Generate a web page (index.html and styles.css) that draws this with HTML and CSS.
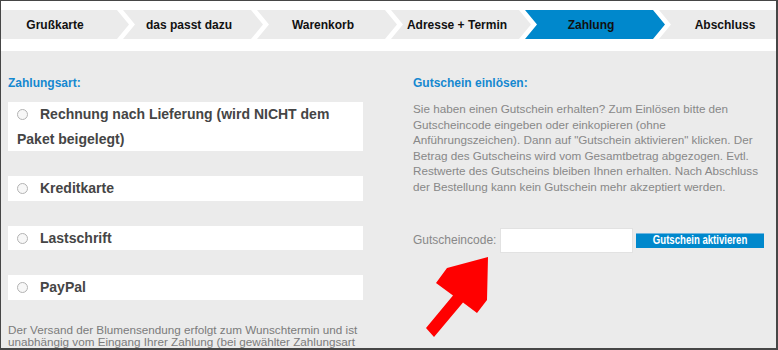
FILE: index.html
```html
<!DOCTYPE html>
<html lang="de">
<head>
<meta charset="utf-8">
<title>Zahlung</title>
<link rel="stylesheet" href="styles.css">
</head>
<body>
<div class="frame">
  <nav class="steps">
    <div class="step">Grußkarte</div>
    <div class="step">das passt dazu</div>
    <div class="step">Warenkorb</div>
    <div class="step">Adresse + Termin</div>
    <div class="step active">Zahlung</div>
    <div class="step">Abschluss</div>
  </nav>
  <main class="content">
    <section class="col left">
      <h2 class="heading">Zahlungsart:</h2>
      <div class="opt"><span class="radio"></span>Rechnung nach Lieferung (wird NICHT dem Paket beigelegt)</div>
      <div class="opt"><span class="radio"></span>Kreditkarte</div>
      <div class="opt"><span class="radio"></span>Lastschrift</div>
      <div class="opt"><span class="radio"></span>PayPal</div>
      <p class="note">Der Versand der Blumensendung erfolgt zum Wunschtermin und ist<br>unabhängig vom Eingang Ihrer Zahlung (bei gewählter Zahlungsart</p>
    </section>
    <section class="col right">
      <h2 class="heading">Gutschein einlösen:</h2>
      <p class="info">Sie haben einen Gutschein erhalten? Zum Einlösen bitte den<br>Gutscheincode eingeben oder einkopieren (ohne<br>Anführungszeichen). Dann auf "Gutschein aktivieren" klicken. Der<br>Betrag des Gutscheins wird vom Gesamtbetrag abgezogen. Evtl.<br>Restwerte des Gutscheins bleiben Ihnen erhalten. Nach Abschluss<br>der Bestellung kann kein Gutschein mehr akzeptiert werden.</p>
      <div class="code-row">
        <label class="code-label">Gutscheincode:</label>
        <span class="code-input"></span>
        <button class="code-btn" type="button"><span class="code-btn-text">Gutschein aktivieren</span></button>
      </div>
    </section>
  </main>
  <svg class="arrow" viewBox="424 255 66 84" width="66" height="84" aria-hidden="true">
    <polygon points="488,257 487,300 477,313 463,302.5 434,337 426,328 453,295.5 436,283 447,268" fill="#ff0000"/>
  </svg>
</div>
</body>
</html>
```

FILE: styles.css
```css
* { box-sizing: border-box; }
html, body { margin: 0; padding: 0; background: #ffffff; }
body { font-family: "Liberation Sans", Arial, sans-serif; }

.frame {
  position: relative;
  width: 778px;
  height: 350px;
  border-style: solid;
  border-color: #464646;
  border-width: 1px 2px 2px 1px;
  background: #ffffff;
  overflow: hidden;
  display: flex;
  flex-direction: column;
}

.steps {
  display: flex;
  margin-top: 9px;
  margin-left: -12px;
  height: 29px;
  flex: 0 0 29px;
}
.step {
  flex: 0 0 140px;
  margin-right: -6px;
  height: 29px;
  background: #ebebeb;
  clip-path: polygon(0 0, calc(100% - 12px) 0, 100% 50%, calc(100% - 12px) 100%, 0 100%, 12px 50%);
  display: flex;
  align-items: center;
  justify-content: center;
  padding: 0 16px 0 8px;
  font-weight: bold;
  font-size: 12px;
  color: #111111;
  white-space: nowrap;
}
.step.active { background: #0088cc; }

.content {
  flex: 1 1 auto;
  margin-top: 12px;
  background: #ebebeb;
  display: grid;
  grid-template-columns: 355px 352px;
  column-gap: 50px;
  padding: 24px 0 0 7px;
}

.heading {
  margin: 0;
  font-size: 12px;
  line-height: 16px;
  font-weight: bold;
  color: #1588d0;
}

.left .heading { margin-bottom: 11px; }

.opt {
  background: #ffffff;
  padding: 0 9px;
  margin-bottom: 25px;
  font-size: 14px;
  line-height: 24.5px;
  font-weight: bold;
  color: #454545;
}
.radio {
  display: inline-block;
  width: 11px;
  height: 11px;
  border: 1px solid #b3b3b3;
  border-radius: 50%;
  background: #f7f7f7;
  margin-right: 12px;
  vertical-align: -1px;
}

.note {
  margin: -1px 0 0;
  font-size: 11.7px;
  line-height: 12.5px;
  color: #7b7b7b;
  white-space: nowrap;
}

.info {
  margin: 10px 0 0;
  font-size: 11.7px;
  line-height: 15.6px;
  color: #888888;
  white-space: nowrap;
}

.code-row {
  display: flex;
  align-items: center;
  margin-top: 33px;
}
.code-label {
  font-size: 12px;
  color: #888888;
  width: 87px;
}
.code-input {
  width: 133px;
  height: 25px;
  background: #ffffff;
  border: 1px solid #e2e2e2;
  margin-right: 3px;
}
.code-btn {
  width: 128px;
  height: 15px;
  padding: 0;
  border: 0;
  border-top: 1px solid #6fb6e0;
  background: #0088cc;
  color: #ffffff;
  font-family: "Liberation Sans", Arial, sans-serif;
  font-size: 12px;
  font-weight: bold;
  line-height: 13px;
  text-align: center;
  overflow: hidden;
  white-space: nowrap;
}
.code-btn-text {
  display: inline-block;
  transform: scaleX(0.8);
}

.arrow {
  position: absolute;
  left: 423px;
  top: 254px;
}
```
